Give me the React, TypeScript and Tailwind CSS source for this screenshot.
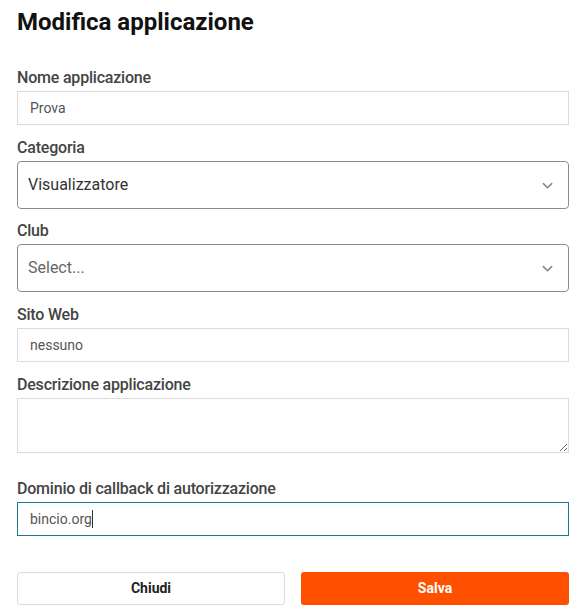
import React from 'react';

const font = { fontFamily: 'Roboto, "Liberation Sans", sans-serif' };

const Label: React.FC<{ children: React.ReactNode }> = ({ children }) => (
  <label className="block text-[16px] leading-[20px] font-medium text-[#444] tracking-[-0.2px] mb-[3px]">
    {children}
  </label>
);

const Chevron = () => (
  <svg width="15" height="15" viewBox="0 0 20 20" className="text-[#888]">
    <path d="M4.5 7.5 10 13l5.5-5.5" fill="none" stroke="currentColor" strokeWidth="2.2" strokeLinecap="round" strokeLinejoin="round" />
  </svg>
);

const SelectBox: React.FC<{ value: string; placeholder?: boolean }> = ({ value, placeholder }) => (
  <div className="flex items-center justify-between h-[48px] border border-[#8c8c8c] rounded-[4px] pl-[10px] pr-[13px] bg-white">
    <span className={`text-[16px] ${placeholder ? 'text-[#666]' : 'text-[#333]'}`}>{value}</span>
    <Chevron />
  </div>
);

const TextInput: React.FC<{ value: string; focused?: boolean }> = ({ value, focused }) => (
  <div
    className={`flex items-center h-[34px] px-[12px] bg-white border ${
      focused ? 'border-[#1d7894]' : 'border-[#dcdcdc]'
    }`}
  >
    <span className="text-[14px] text-[#555]">{value}</span>
    {focused && <span className="w-px h-[18px] bg-[#333]" />}
  </div>
);

export default function App() {
  return (
    <div className="bg-white min-h-[614px] pl-[17px] pr-[14px] pt-[7px]" style={font}>
      <h1 className="text-[24px] leading-[30px] font-bold text-[#111] mb-[31px]">Modifica applicazione</h1>

      <div className="mb-[13px]">
        <Label>Nome applicazione</Label>
        <TextInput value="Prova" />
      </div>

      <div className="mb-[12px]">
        <Label>Categoria</Label>
        <SelectBox value="Visualizzatore" />
      </div>

      <div className="mb-[13px]">
        <Label>Club</Label>
        <SelectBox value="Select..." placeholder />
      </div>

      <div className="mb-[13px]">
        <Label>Sito Web</Label>
        <TextInput value="nessuno" />
      </div>

      <div className="mb-[26px]">
        <Label>Descrizione applicazione</Label>
        <textarea className="block w-full h-[55px] border border-[#dcdcdc] outline-none resize-y" />
      </div>

      <div className="mb-[36px]">
        <Label>Dominio di callback di autorizzazione</Label>
        <TextInput value="bincio.org" focused />
      </div>

      <div className="grid grid-cols-2 gap-[16px]">
        <button className="h-[33px] rounded-[3px] border border-[#dcdcdc] bg-white text-[14px] font-bold text-[#222]">
          Chiudi
        </button>
        <button className="h-[33px] rounded-[3px] bg-[#ff5000] text-[14px] font-bold text-white">Salva</button>
      </div>
    </div>
  );
}
